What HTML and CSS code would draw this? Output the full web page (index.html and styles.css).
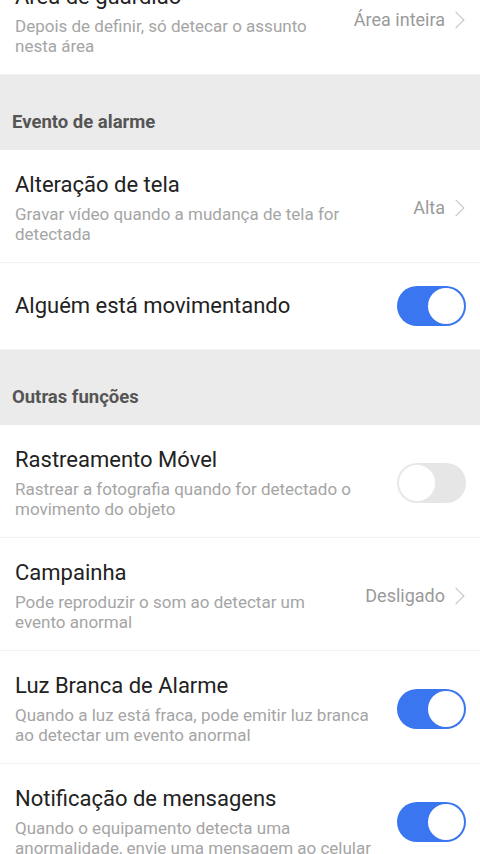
FILE: index.html
```html
<!DOCTYPE html>
<html lang="pt-br">
<head>
<meta charset="UTF-8">
<meta name="viewport" content="width=device-width, initial-scale=1.0">
<title>Configurações de alarme</title>
<link rel="stylesheet" href="styles.css">
</head>
<body>

<div class="lista">
    <div class="item">
        <div class="textos">
            <div class="titulo">Área de guardião</div>
            <div class="descricao">Depois de definir, só detecar o assunto nesta área</div>
        </div>
        <div class="valor">Área inteira <span class="seta"></span></div>
    </div>

    <div class="secao">Evento de alarme</div>

    <div class="item">
        <div class="textos">
            <div class="titulo">Alteração de tela</div>
            <div class="descricao">Gravar vídeo quando a mudança de tela for detectada</div>
        </div>
        <div class="valor">Alta <span class="seta"></span></div>
    </div>
    <div class="item simples">
        <div class="textos">
            <div class="titulo">Alguém está movimentando</div>
        </div>
        <div class="chave ligada"></div>
    </div>

    <div class="secao">Outras funções</div>

    <div class="item">
        <div class="textos">
            <div class="titulo">Rastreamento Móvel</div>
            <div class="descricao">Rastrear a fotografia quando for detectado o movimento do objeto</div>
        </div>
        <div class="chave"></div>
    </div>
    <div class="item">
        <div class="textos">
            <div class="titulo">Campainha</div>
            <div class="descricao">Pode reproduzir o som ao detectar um evento anormal</div>
        </div>
        <div class="valor">Desligado <span class="seta"></span></div>
    </div>
    <div class="item">
        <div class="textos">
            <div class="titulo">Luz Branca de Alarme</div>
            <div class="descricao">Quando a luz está fraca, pode emitir luz branca ao detectar um evento anormal</div>
        </div>
        <div class="chave ligada"></div>
    </div>
    <div class="item">
        <div class="textos">
            <div class="titulo">Notificação de mensagens</div>
            <div class="descricao">Quando o equipamento detecta uma anormalidade, envie uma mensagem ao celular</div>
        </div>
        <div class="chave ligada"></div>
    </div>
</div>

</body>
</html>
```

FILE: styles.css
```css
body {
    margin: 0;
    background-color: #fff;
    font-family: Roboto, "Noto Sans", sans-serif;
    overflow: hidden;
}

.lista {
    margin-top: -38px;
}

.item {
    display: flex;
    align-items: center;
    padding: 21px 14px 18px 15px;
    border-bottom: 1px solid #f2f2f2;
    background-color: #fff;
}

.item.simples {
    min-height: 87px;
    padding-top: 0;
    padding-bottom: 0;
    box-sizing: border-box;
}

.textos {
    flex: 1;
    margin-right: 20px;
}

.titulo {
    font-size: 22px;
    line-height: 28px;
    color: #222;
}

.descricao {
    margin-top: 5px;
    font-size: 17px;
    line-height: 20px;
    color: #a5a5a5;
}

.valor {
    display: flex;
    align-items: center;
    gap: 10px;
    font-size: 18px;
    color: #9a9a9a;
    white-space: nowrap;
}

.seta {
    width: 11px;
    height: 11px;
    border-top: 1.5px solid #c2c2c2;
    border-right: 1.5px solid #c2c2c2;
    transform: rotate(45deg);
    margin-left: -5px;
    margin-right: 4px;
}

.secao {
    height: 75px;
    box-sizing: border-box;
    padding: 35px 12px 0;
    background-color: #ebebeb;
    font-size: 18.5px;
    line-height: 24px;
    font-weight: bold;
    color: #555;
}

.chave {
    position: relative;
    flex-shrink: 0;
    width: 69px;
    height: 40px;
    border-radius: 20px;
    background-color: #e6e6e6;
}

.chave::after {
    content: "";
    position: absolute;
    top: 2px;
    left: 2px;
    width: 36px;
    height: 36px;
    border-radius: 50%;
    background-color: #fff;
    box-shadow: 0 0 0 1px #e9e9e9;
}

.chave.ligada {
    background-color: #3a76ef;
}

.chave.ligada::after {
    left: 31px;
    box-shadow: none;
}
```
